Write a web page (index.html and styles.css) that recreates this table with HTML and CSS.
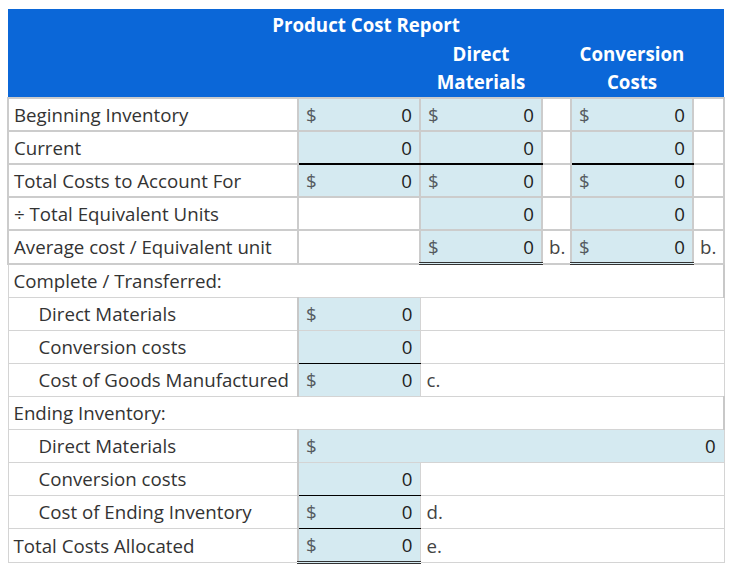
FILE: index.html
```html
<!DOCTYPE html>
<html>
<head>
<meta charset="utf-8">
<link rel="stylesheet" href="styles.css">
</head>
<body>
<table class="report">
  <colgroup>
    <col class="c-label"><col class="c-val"><col class="c-val"><col class="c-note"><col class="c-val"><col class="c-note2">
  </colgroup>
  <thead>
    <tr class="title-row"><th colspan="6">Product Cost Report</th></tr>
    <tr class="sub-row"><th colspan="2"></th><th>Direct<br>Materials</th><th></th><th>Conversion<br>Costs</th><th></th></tr>
  </thead>
  <tbody>
    <tr class="top">
      <td class="lbl">Beginning Inventory</td>
      <td class="in"><div class="amt"><span class="cur">$</span><span class="num">0</span></div></td>
      <td class="in"><div class="amt"><span class="cur">$</span><span class="num">0</span></div></td>
      <td></td>
      <td class="in"><div class="amt"><span class="cur">$</span><span class="num">0</span></div></td>
      <td></td>
    </tr>
    <tr class="top">
      <td class="lbl">Current</td>
      <td class="in ul"><div class="amt"><span class="num">0</span></div></td>
      <td class="in ul"><div class="amt"><span class="num">0</span></div></td>
      <td></td>
      <td class="in ul"><div class="amt"><span class="num">0</span></div></td>
      <td></td>
    </tr>
    <tr class="top">
      <td class="lbl">Total Costs to Account For</td>
      <td class="in"><div class="amt"><span class="cur">$</span><span class="num">0</span></div></td>
      <td class="in"><div class="amt"><span class="cur">$</span><span class="num">0</span></div></td>
      <td></td>
      <td class="in"><div class="amt"><span class="cur">$</span><span class="num">0</span></div></td>
      <td></td>
    </tr>
    <tr class="top">
      <td class="lbl">÷ Total Equivalent Units</td>
      <td></td>
      <td class="in"><div class="amt"><span class="num">0</span></div></td>
      <td></td>
      <td class="in"><div class="amt"><span class="num">0</span></div></td>
      <td></td>
    </tr>
    <tr class="top">
      <td class="lbl">Average cost / Equivalent unit</td>
      <td></td>
      <td class="in dbl"><div class="amt"><span class="cur">$</span><span class="num">0</span></div></td>
      <td class="note">b.</td>
      <td class="in dbl"><div class="amt"><span class="cur">$</span><span class="num">0</span></div></td>
      <td class="note">b.</td>
    </tr>
    <tr>
      <td class="lbl" colspan="6">Complete / Transferred:</td>
    </tr>
    <tr>
      <td class="lbl ind">Direct Materials</td>
      <td class="in"><div class="amt"><span class="cur">$</span><span class="num">0</span></div></td>
      <td colspan="4"></td>
    </tr>
    <tr>
      <td class="lbl ind">Conversion costs</td>
      <td class="in ul1"><div class="amt"><span class="num">0</span></div></td>
      <td colspan="4"></td>
    </tr>
    <tr>
      <td class="lbl ind">Cost of Goods Manufactured</td>
      <td class="in"><div class="amt"><span class="cur">$</span><span class="num">0</span></div></td>
      <td class="note" colspan="4">c.</td>
    </tr>
    <tr>
      <td class="lbl" colspan="6">Ending Inventory:</td>
    </tr>
    <tr>
      <td class="lbl ind">Direct Materials</td>
      <td class="in" colspan="5"><div class="amt wide"><span class="cur">$</span><span class="num">0</span></div></td>
    </tr>
    <tr>
      <td class="lbl ind">Conversion costs</td>
      <td class="in ul1"><div class="amt"><span class="num">0</span></div></td>
      <td colspan="4"></td>
    </tr>
    <tr>
      <td class="lbl ind">Cost of Ending Inventory</td>
      <td class="in ul1"><div class="amt"><span class="cur">$</span><span class="num">0</span></div></td>
      <td class="note" colspan="4">d.</td>
    </tr>
    <tr>
      <td class="lbl">Total Costs Allocated</td>
      <td class="in dbl"><div class="amt"><span class="cur">$</span><span class="num">0</span></div></td>
      <td class="note" colspan="4">e.</td>
    </tr>
  </tbody>
</table>
</body>
</html>
```

FILE: styles.css
```css
html, body {
  margin: 0;
  padding: 0;
  background: #ffffff;
}

body {
  padding: 9px 0 0 7px;
  font-family: "Open Sans", "DejaVu Sans", sans-serif;
  font-size: 18.7px;
  color: #333333;
}

.report {
  width: 716px;
  table-layout: fixed;
  border-collapse: collapse;
}

.c-label { width: 290px; }
.c-val { width: 122px; }
.c-note { width: 29px; }
.c-note2 { width: 31px; }

.report th {
  background: #0b67d8;
  color: #ffffff;
  font-weight: 700;
  font-size: 18.7px;
  line-height: 28px;
  padding: 0;
  text-align: center;
}

.title-row th {
  height: 31px;
  padding-top: 2px;
  box-sizing: border-box;
  vertical-align: top;
}

.sub-row th {
  height: 57px;
  vertical-align: top;
}

.report td {
  height: 32px;
  padding: 0;
  border: 1px solid #d4d4d4;
  line-height: 24px;
  vertical-align: middle;
  white-space: nowrap;
}

.report tr.top td {
  height: 31px;
  border-width: 2px;
  border-color: #cccccc;
}

.report td.lbl {
  padding-left: 5px;
  border-right: 2px solid #c8c8c8;
}

.report td.ind {
  padding-left: 30px;
}

.report td.in {
  background: #d5eaf1;
}

.amt {
  display: flex;
  align-items: center;
  padding: 0 7px 0 7px;
}

.amt.wide {
  padding-right: 8px;
}

.cur {
  color: #555a60;
}

.num {
  margin-left: auto;
  color: #222222;
}

.report td.note {
  padding-left: 6px;
  color: #444444;
}

.report tr.top td.ul {
  border-bottom: 2px solid #000000;
}

.report td.ul1 {
  border-bottom: 1px solid #000000;
}

.report tr.top td.dbl,
.report td.dbl {
  border-bottom: 3px double #333333;
}
```
